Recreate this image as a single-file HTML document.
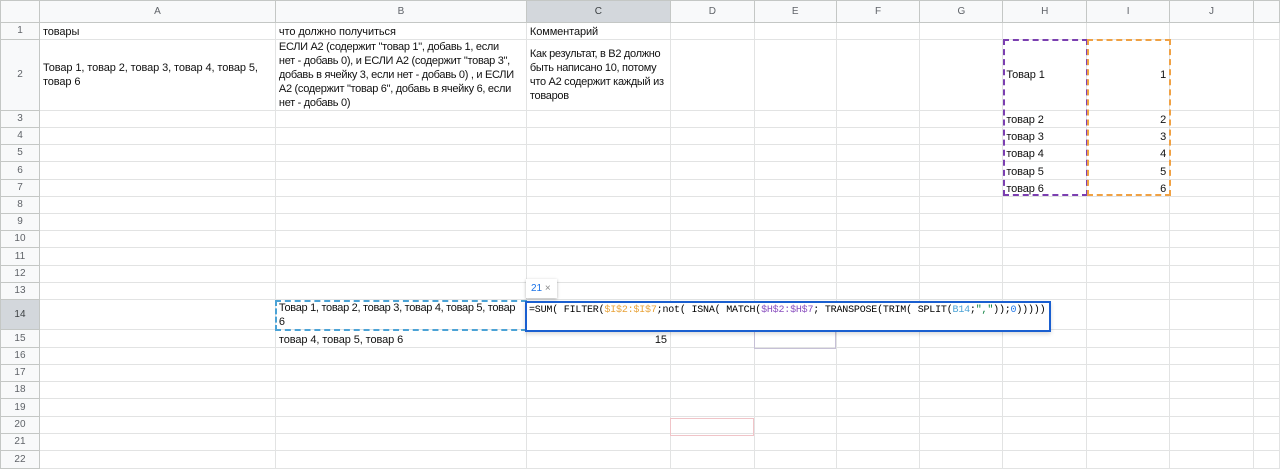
<!DOCTYPE html>
<html><head><meta charset="utf-8"><style>
*{box-sizing:border-box}
body{margin:0;width:1280px;height:461px;overflow:hidden;background:#fff;font-family:"Liberation Sans",Arial,sans-serif;position:relative}
table{border-collapse:collapse;table-layout:fixed;position:absolute;left:0;top:0}
td{border:1px solid #e2e3e3;padding:0 3px;font-size:11px;letter-spacing:-0.1px;color:#111;overflow:hidden;white-space:nowrap;vertical-align:bottom;line-height:14px}
td.h{background:#f8f9fa;color:#5f6368;font-size:10px;letter-spacing:0;text-align:center;vertical-align:middle;border-color:#c4c7c5}
td.sel{background:#d3d7dc;color:#3c4043}
td.w{vertical-align:middle}
td.t{letter-spacing:-0.3px}
td.r{text-align:right}
.ov{position:absolute}
</style></head><body>
<table>
<colgroup><col style="width:39px"><col style="width:236px"><col style="width:251px"><col style="width:144px"><col style="width:84px"><col style="width:82px"><col style="width:84px"><col style="width:83px"><col style="width:84px"><col style="width:83px"><col style="width:84px"><col style="width:26px"></colgroup>
<tr style="height:22px"><td class="h"></td><td class="h">A</td><td class="h">B</td><td class="h sel">C</td><td class="h">D</td><td class="h">E</td><td class="h">F</td><td class="h">G</td><td class="h">H</td><td class="h">I</td><td class="h">J</td><td class="h"></td></tr>
<tr style="height:17px"><td class="h">1</td><td>товары</td><td>что должно получиться</td><td>Комментарий</td><td></td><td></td><td></td><td></td><td></td><td></td><td></td><td></td></tr>
<tr style="height:70px"><td class="h">2</td><td class="w">Товар 1, товар 2, товар 3, товар 4, товар 5,<br>товар 6</td><td class="w t">ЕСЛИ А2 (содержит "товар 1", добавь 1, если<br>нет - добавь 0), и ЕСЛИ А2 (содержит "товар 3",<br>добавь в ячейку 3, если нет - добавь 0) , и ЕСЛИ<br>А2 (содержит "товар 6", добавь в ячейку 6, если<br>нет - добавь 0)</td><td class="w t">Как результат, в В2 должно<br>быть написано 10, потому<br>что А2 содержит каждый из<br>товаров</td><td></td><td></td><td></td><td></td><td style="vertical-align:middle">Товар 1</td><td class="r" style="vertical-align:middle">1</td><td></td><td></td></tr>
<tr style="height:17px"><td class="h">3</td><td></td><td></td><td></td><td></td><td></td><td></td><td></td><td>товар 2</td><td class="r">2</td><td></td><td></td></tr>
<tr style="height:17px"><td class="h">4</td><td></td><td></td><td></td><td></td><td></td><td></td><td></td><td>товар 3</td><td class="r">3</td><td></td><td></td></tr>
<tr style="height:17px"><td class="h">5</td><td></td><td></td><td></td><td></td><td></td><td></td><td></td><td>товар 4</td><td class="r">4</td><td></td><td></td></tr>
<tr style="height:18px"><td class="h">6</td><td></td><td></td><td></td><td></td><td></td><td></td><td></td><td>товар 5</td><td class="r">5</td><td></td><td></td></tr>
<tr style="height:17px"><td class="h">7</td><td></td><td></td><td></td><td></td><td></td><td></td><td></td><td>товар 6</td><td class="r">6</td><td></td><td></td></tr>
<tr style="height:17px"><td class="h">8</td><td></td><td></td><td></td><td></td><td></td><td></td><td></td><td></td><td></td><td></td><td></td></tr>
<tr style="height:17px"><td class="h">9</td><td></td><td></td><td></td><td></td><td></td><td></td><td></td><td></td><td></td><td></td><td></td></tr>
<tr style="height:17px"><td class="h">10</td><td></td><td></td><td></td><td></td><td></td><td></td><td></td><td></td><td></td><td></td><td></td></tr>
<tr style="height:18px"><td class="h">11</td><td></td><td></td><td></td><td></td><td></td><td></td><td></td><td></td><td></td><td></td><td></td></tr>
<tr style="height:17px"><td class="h">12</td><td></td><td></td><td></td><td></td><td></td><td></td><td></td><td></td><td></td><td></td><td></td></tr>
<tr style="height:17px"><td class="h">13</td><td></td><td></td><td></td><td></td><td></td><td></td><td></td><td></td><td></td><td></td><td></td></tr>
<tr style="height:30px"><td class="h sel">14</td><td></td><td class="w t">Товар 1, товар 2, товар 3, товар 4, товар 5, товар<br>6</td><td></td><td></td><td></td><td></td><td></td><td></td><td></td><td></td><td></td></tr>
<tr style="height:18px"><td class="h">15</td><td></td><td>товар 4, товар 5, товар 6</td><td class="r">15</td><td></td><td></td><td></td><td></td><td></td><td></td><td></td><td></td></tr>
<tr style="height:17px"><td class="h">16</td><td></td><td></td><td></td><td></td><td></td><td></td><td></td><td></td><td></td><td></td><td></td></tr>
<tr style="height:17px"><td class="h">17</td><td></td><td></td><td></td><td></td><td></td><td></td><td></td><td></td><td></td><td></td><td></td></tr>
<tr style="height:17px"><td class="h">18</td><td></td><td></td><td></td><td></td><td></td><td></td><td></td><td></td><td></td><td></td><td></td></tr>
<tr style="height:18px"><td class="h">19</td><td></td><td></td><td></td><td></td><td></td><td></td><td></td><td></td><td></td><td></td><td></td></tr>
<tr style="height:17px"><td class="h">20</td><td></td><td></td><td></td><td></td><td></td><td></td><td></td><td></td><td></td><td></td><td></td></tr>
<tr style="height:17px"><td class="h">21</td><td></td><td></td><td></td><td></td><td></td><td></td><td></td><td></td><td></td><td></td><td></td></tr>
<tr style="height:18px"><td class="h">22</td><td></td><td></td><td></td><td></td><td></td><td></td><td></td><td></td><td></td><td></td><td></td></tr>
</table>
<div class="ov" style="left:1003px;top:39px;width:85px;height:157px;border:2px dashed #7b3fb0"></div>
<div class="ov" style="left:1087px;top:39px;width:84px;height:157px;border:2px dashed #f0a143"></div>
<div class="ov" style="left:275px;top:300px;width:252px;height:31px;border:2px dashed #4ca3d6"></div>
<div class="ov" style="left:754px;top:331px;width:82px;height:18px;border:1px solid #c6c0d6"></div>
<div class="ov" style="left:670px;top:418px;width:84px;height:18px;border:1px solid #f0c4c8"></div>
<div class="ov" style="left:526px;top:279px;width:31px;height:19px;background:#fff;box-shadow:0 1px 3px rgba(0,0,0,.3);font-size:10px;line-height:19px;color:#1a73e8;padding-left:5px">21 <span style="color:#888">×</span></div>
<div class="ov" style="left:525px;top:301px;width:526px;height:31px;background:#fff;border:2px solid #1a5fd0;font-family:'Liberation Mono',monospace;font-size:10px;line-height:14px;padding:1px 0 0 2px;white-space:nowrap;letter-spacing:-0.2px;box-shadow:0 2px 4px rgba(0,0,0,.15)">=SUM( FILTER(<span style="color:#e8a33a">$I$2:$I$7</span>;not( ISNA( MATCH(<span style="color:#8a4fbf">$H$2:$H$7</span>; TRANSPOSE(TRIM( SPLIT(<span style="color:#4ca3d6">B14</span>;<span style="color:#0d8040">","</span>));<span style="color:#1a73e8">0</span>)))))</div>
</body></html>
